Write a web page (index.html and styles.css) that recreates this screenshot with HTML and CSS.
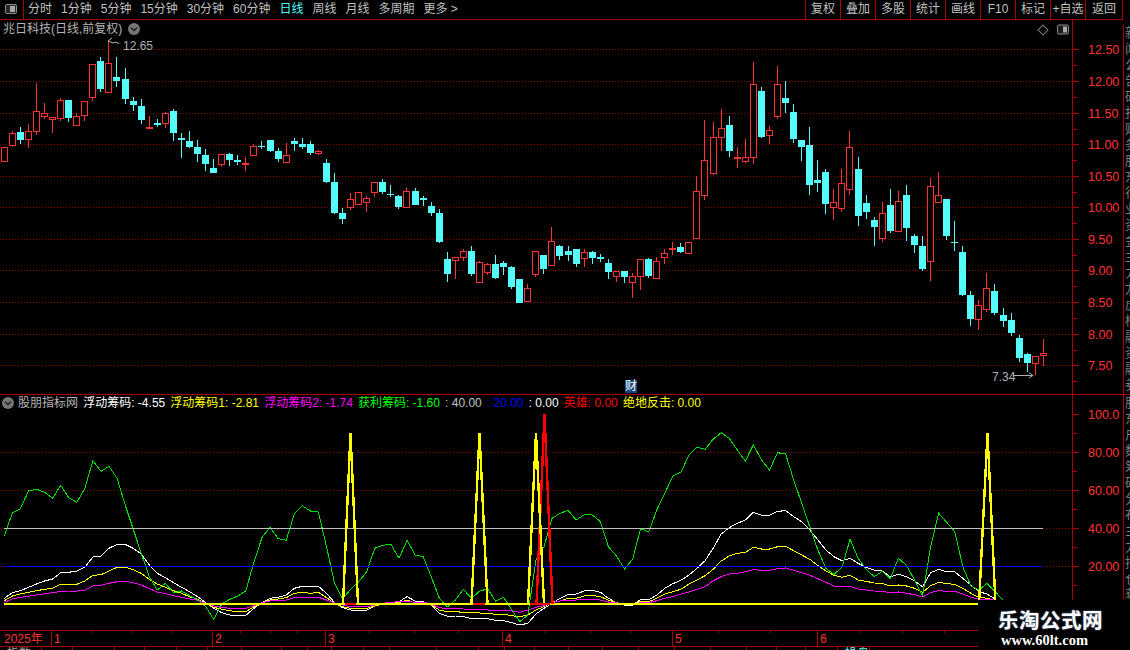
FILE: index.html
```html
<!DOCTYPE html>
<html lang="zh-CN">
<head>
    <meta charset="UTF-8">
    <title>兆日科技</title>
    <link rel="stylesheet" href="styles.css">
</head>
<body>
    <div class="page">
        <div class="topBar">
            <div class="panelToggle">
                <svg class="toggleIcon" viewBox="0 0 12 10"><rect x="0.5" y="0.5" width="11" height="9" rx="1.5" fill="#262626" stroke="#8c8c8c"/><rect x="5" y="2" width="5" height="6" fill="#a8a8a8"/></svg>
            </div>
            <div class="periods">
                <span>分时</span><span>1分钟</span><span>5分钟</span><span>15分钟</span><span>30分钟</span><span>60分钟</span>
                <span class="periodOn">日线</span><span>周线</span><span>月线</span><span>多周期</span><span>更多 &gt;</span>
            </div>
            <div class="tools">
                <span>复权</span><span>叠加</span><span>多股</span><span>统计</span><span>画线</span><span>F10</span><span>标记</span><span>+自选</span><span>返回</span>
            </div>
        </div>

        <div class="pane paneMain">
            <svg id="mainChart" class="plot" viewBox="0 20 1123 374" width="1123" height="374"></svg>
            <div class="side"><p>新闻公告研报财务股东行业资金主力龙虎榜融资融券</p></div>
            <div class="paneTitle">
                <span>兆日科技(日线,前复权)</span>
                <svg class="chevron" viewBox="0 0 12 12"><circle cx="6" cy="6" r="6" fill="#767676"/><path d="M3 4.8 6 7.6 9 4.8" fill="none" stroke="#1c1c1c" stroke-width="1.4"/></svg>
            </div>
            <div class="paneIcons">
                <span class="diamond"></span>
                <svg class="toggleIcon" viewBox="0 0 12 10"><rect x="0.5" y="0.5" width="11" height="9" rx="1.5" fill="#1a1a1a" stroke="#8c8c8c"/><rect x="6" y="2" width="4" height="6" fill="#a8a8a8"/></svg>
            </div>
            <div class="caiTag">财</div>
        </div>

        <div class="pane paneSub">
            <svg id="subChart" class="plot" viewBox="0 395 1123 251" width="1123" height="251"></svg>
            <div class="side sideSub"><p>股东户数筹码分布主力持仓获利比例</p></div>
            <div class="legend">
                <svg class="chevron" viewBox="0 0 12 12"><circle cx="6" cy="6" r="6" fill="#767676"/><path d="M3 4.8 6 7.6 9 4.8" fill="none" stroke="#1c1c1c" stroke-width="1.4"/></svg>
                <span class="legendName">股朋指标网</span>
                <span class="white">浮动筹码: -4.55</span>
                <span class="yellow">浮动筹码1: -2.81</span>
                <span class="magenta">浮动筹码2: -1.74</span>
                <span class="green">获利筹码: -1.60</span>
                <span class="grey">: 40.00</span>
                <span class="blue">: 20.00</span>
                <span class="white">: 0.00</span>
                <span class="red">英雄: 0.00</span>
                <span class="yellow">绝地反击: 0.00</span>
            </div>
        </div>

        <div class="tabs">
            <span class="tab tabW42">指数</span><span class="tab tabW31"></span><span class="tab tabW42"></span><span class="tab tabW30"></span><span class="tab tabW32"></span><span class="tab tabW31"></span><span class="tab tabW34"></span><span class="tab tabW40"></span><span class="tab tabW26"></span><span class="tab tabW24"></span><span class="tab tabW32"></span><span class="tab tabW26"></span><span class="tab tabW47"></span><span class="tab tabW42"></span><span class="tab tabW26"></span><span class="tab tabW30"></span><span class="tab tabW34"></span><span class="tab tabW34"></span><span class="tab tabW36"></span><span class="tab tabW36"></span><span class="tab tabW36"></span><span class="tab tabW36"></span><span class="tab tabW30"></span><span class="tab tabW29"></span><span class="tab tabW32"></span><span class="tab tabW32 tabOn">操盘</span>
        </div>

        <div class="watermark">
            <div class="markName">乐淘公式网</div>
            <div class="markUrl">www.60lt.com</div>
        </div>
    </div>
    <script src="chart.js"></script>
</body>
</html>
```

FILE: styles.css
```css
*{
    margin: 0;
    padding: 0;
    box-sizing: border-box;
}
html, body{
    background-color: #000;
    overflow: hidden;
}
.page{
    position: relative;
    width: 1130px;
    height: 650px;
    overflow: hidden;
    background-color: #000;
    color: #c0c0c0;
    font-family: "Liberation Sans", "Noto Sans CJK SC", sans-serif;
    font-size: 12px;
    line-height: 14px;
}

/* top bar */
.topBar{
    display: flex;
    width: 1123px;
    height: 20px;
    border-bottom: 1px solid #aa0000;
}
.panelToggle{
    width: 24px;
    padding: 4px 0 0 5px;
    border-right: 1px solid #aa0000;
}
.toggleIcon{
    display: block;
    width: 12px;
    height: 10px;
}
.periods{
    display: flex;
    gap: 9px;
    padding: 2px 0 0 4px;
}
.periodOn{
    color: #54fcfc;
}
.tools{
    display: flex;
    margin-left: auto;
}
.tools span{
    width: 35px;
    padding-top: 2px;
    text-align: center;
    border-left: 1px solid #aa0000;
    white-space: nowrap;
}
.tools span:last-child{
    width: 38px;
    border-right: 1px solid #aa0000;
}

/* chart panes */
.pane{
    position: relative;
    display: flex;
}
.paneMain{
    height: 375px;
    border-bottom: 1px solid #aa0000;
}
.paneSub{
    height: 251px;
}
.plot{
    display: block;
    flex: none;
}
.side{
    flex: none;
    width: 7px;
    margin-top: 5px;
    overflow: hidden;
    border-left: 1px solid #aa0000;
    color: #7c7c7c;
}
.sideSub{
    height: 204px;
    margin-top: 0;
}
.side p{
    width: 13px;
    margin-left: 1px;
    font-size: 13px;
    line-height: 16px;
    word-break: break-all;
}
.paneTitle{
    position: absolute;
    left: 3px;
    top: 2px;
    display: flex;
    align-items: center;
    gap: 6px;
    color: #b4b4b4;
}
.chevron{
    display: block;
    flex: none;
    width: 12px;
    height: 12px;
}
.paneIcons{
    position: absolute;
    left: 1039px;
    top: 4px;
    display: flex;
    align-items: center;
    gap: 10px;
}
.paneIcons .toggleIcon{
    height: 11px;
}
.diamond{
    display: block;
    width: 8px;
    height: 8px;
    border: 1px solid #7c7c7c;
    transform: rotate(45deg);
}
.caiTag{
    position: absolute;
    left: 625px;
    top: 360px;
    width: 12px;
    height: 13px;
    background-color: #14457c;
    color: #fff;
    line-height: 13px;
    text-align: center;
}
.legend{
    position: absolute;
    left: 2px;
    top: 1px;
    display: flex;
    align-items: center;
    gap: 5.1px;
    white-space: nowrap;
}
.legendName{
    margin-left: -1px;
    color: #b4b4b4;
}
.white{ color: #fff; }
.yellow{ color: #ffff00; }
.magenta{ color: #ff00ff; }
.green{ color: #00ff00; }
.grey{ color: #c0c0c0; }
.blue{ color: #0000ff; }
.red{ color: #ff0000; }

/* svg parts */
.axisLabel{
    fill: #ff3232;
    font-size: 12.5px;
    font-family: "Liberation Sans", sans-serif;
}
.dateLabel{
    fill: #ff3232;
    font-size: 12px;
    font-family: "Liberation Sans", "Noto Sans CJK SC", sans-serif;
}
.priceNote{
    fill: #b0b0b0;
    font-size: 12px;
    font-family: "Liberation Sans", sans-serif;
}

/* bottom tabs, only their top edge is on screen */
.tabs{
    display: flex;
    height: 4px;
    padding-left: 0;
    border-top: 1px solid #aa0000;
    overflow: hidden;
}
.tab{
    flex: none;
    height: 12px;
    padding: 1px 0 0 7px;
    border-right: 1px solid #aa0000;
    line-height: 12px;
    color: #aaa;
}
.tabOn{ color: #54fcfc; }
.tabW24{ width: 24px; }
.tabW26{ width: 26px; }
.tabW29{ width: 29px; }
.tabW30{ width: 30px; }
.tabW31{ width: 31px; }
.tabW32{ width: 32px; }
.tabW34{ width: 34px; }
.tabW36{ width: 36px; }
.tabW40{ width: 40px; }
.tabW42{ width: 42px; }
.tabW47{ width: 47px; }

.watermark{
    position: absolute;
    left: 978px;
    top: 600px;
    width: 152px;
    height: 50px;
    padding: 7px 0 0 20px;
    background-color: #000;
    color: #fff;
}
.markName{
    font-family: "Noto Sans CJK SC", sans-serif;
    font-weight: 700;
    font-size: 20.5px;
    line-height: 24px;
    letter-spacing: 0.5px;
    text-shadow: 0 0 2px #7f93b8;
}
.markUrl{
    margin: 2px 0 0 3px;
    font-family: "Liberation Serif", serif;
    font-weight: 700;
    font-size: 14.5px;
    line-height: 15px;
}
```

FILE: chart.js
```javascript
var SVG_NS = "http://www.w3.org/2000/svg";
var RED = "#ff3232";
var CYAN = "#54fcfc";
var LINE_RED = "#aa0000";
var DOT_RED = "#860000";

function add(svg, name, attrs, text) {
    var el = document.createElementNS(SVG_NS, name);
    for (var key in attrs) {
        el.setAttribute(key, attrs[key]);
    }
    if (text) {
        el.textContent = text;
    }
    svg.appendChild(el);
    return el;
}

function hLine(svg, x1, x2, y, color, extra) {
    var attrs = { x1: x1, x2: x2, y1: y + 0.5, y2: y + 0.5, stroke: color, "shape-rendering": "crispEdges" };
    for (var key in extra) {
        attrs[key] = extra[key];
    }
    return add(svg, "line", attrs);
}

function vLine(svg, x, y1, y2, color) {
    return add(svg, "line", { x1: x + 0.5, x2: x + 0.5, y1: y1, y2: y2, stroke: color, "shape-rendering": "crispEdges" });
}

// 第k根K线的x坐标
function candleX(k) {
    return Math.floor(4.2 + 8.055 * k);
}

function polyline(svg, points, color, width) {
    return add(svg, "polyline", {
        points: points.join(" "),
        fill: "none",
        stroke: color,
        "stroke-width": width,
        "stroke-linejoin": "miter",
        "shape-rendering": "crispEdges"
    });
}

// up(1 red / 0 cyan), body top, body bottom, high, low -- in page pixels
var candles = [
    [1,147,162,147,162],[1,133,146,131,147],[0,132,140,127,144],[1,131,140,124,148],[1,111,132,83,135],
    [1,113,117,103,119],[1,117,120,117,133],[1,100,119,98,121],[0,100,118,100,122],[1,116,126,113,126],
    [1,101,116,101,121],[1,64,98,64,101],[0,61,89,57,92],[1,63,93,40,93],[0,77,81,57,87],
    [0,79,99,68,104],[0,101,105,97,111],[0,106,120,99,124],[1,127,129,116,129],[0,123,125,119,127],
    [1,113,124,112,128],[0,111,133,109,141],[0,138,140,133,158],[0,141,147,131,148],[0,147,154,140,162],
    [0,155,164,149,171],[0,168,173,159,173],[1,154,165,154,167],[0,154,160,153,166],[0,160,162,155,165],
    [1,163,165,157,171],[1,146,156,144,156],[0,146,147,141,149],[0,140,151,140,152],[0,151,159,148,162],
    [1,155,163,143,163],[0,141,144,138,151],[0,144,147,138,149],[0,144,153,141,155],[1,151,154,150,155],
    [0,163,182,159,183],[0,182,213,173,214],[0,213,219,208,224],[1,199,208,193,210],[1,192,205,192,205],
    [1,198,203,196,212],[1,182,193,182,197],[0,182,192,179,194],[0,194,195,185,197],[0,196,207,195,209],
    [1,191,208,187,208],[0,191,205,188,205],[0,198,200,196,206],[0,206,213,202,216],[0,213,242,209,243],
    [0,259,274,252,282],[1,257,261,257,279],[1,251,258,249,261],[0,251,274,246,276],[1,262,283,261,283],
    [1,264,273,263,275],[0,264,278,255,279],[0,263,267,261,275],[0,267,287,266,289],[0,279,303,279,303],
    [1,288,302,284,302],[1,251,275,251,277],[0,255,269,255,274],[1,241,266,227,266],[0,246,256,245,260],
    [0,251,255,246,261],[0,249,264,249,267],[1,252,259,249,267],[0,252,258,251,264],[0,257,259,254,262],
    [0,263,272,259,279],[1,271,277,271,282],[0,271,277,271,283],[1,276,283,273,298],[1,259,277,259,290],
    [0,259,276,258,278],[1,261,279,257,279],[1,253,258,249,264],[1,248,250,242,255],[0,247,252,243,253],
    [1,242,254,242,254],[1,191,239,176,239],[1,160,196,120,200],[1,137,174,122,175],[1,128,138,109,151],
    [0,125,151,116,157],[1,157,158,147,168],[1,157,162,139,163],[1,84,158,62,164],[0,91,137,87,138],
    [1,130,136,126,144],[1,84,117,66,119],[0,98,103,81,113],[0,112,139,104,143],[0,140,147,140,161],
    [0,145,185,127,195],[0,180,183,160,192],[0,172,204,169,214],[1,202,208,189,220],[1,183,209,169,212],
    [1,147,190,131,195],[0,169,216,157,226],[0,203,212,195,219],[0,220,227,217,246],[1,213,239,202,242],
    [0,205,231,189,233],[1,201,232,191,232],[0,195,228,185,241],[0,236,245,234,253],[0,246,269,236,271],
    [1,186,262,178,281],[1,195,203,172,203],[0,199,236,199,240],[0,242,243,221,251],[0,252,295,246,296],
    [0,295,319,291,326],[1,305,320,300,330],[1,288,310,273,312],[0,291,313,284,315],[0,315,321,308,327],
    [0,320,333,313,336],[0,338,358,335,362],[0,354,363,353,372],[1,356,364,356,375],[1,353,356,339,366]
];

// 指标线，一根K线一个点，单位是1/3像素，从 y=430 算起
var whiteLine = [505,488,482,472,462,453,447,428,427,423,412,381,379,355,343,343,355,372,405,430,443,458,472,485,500,518,535,548,555,556,556,535,518,505,502,495,475,469,469,469,490,518,533,540,541,541,527,520,518,515,500,513,515,525,550,558,558,560,566,565,566,571,572,578,585,580,552,535,520,505,493,492,483,481,487,505,518,525,525,509,510,495,475,461,451,435,415,392,355,312,293,280,270,247,256,256,244,242,260,275,300,330,360,380,392,385,400,412,420,423,440,433,440,452,470,428,418,425,426,445,465,485,492,507];
var yellowLine = [512,498,492,487,482,478,475,463,463,463,453,436,434,423,412,411,419,430,448,462,472,482,490,500,508,520,532,538,542,545,545,530,518,510,507,503,490,487,490,487,503,520,530,535,536,535,528,522,519,518,510,518,519,525,540,545,545,547,548,549,550,553,553,557,560,555,540,530,518,513,505,505,498,496,500,510,518,522,522,515,515,505,492,485,478,462,450,437,418,393,378,370,367,352,357,357,350,349,362,375,388,407,423,436,442,436,450,454,459,460,468,465,468,475,487,467,457,461,463,475,490,502,505,510];
var magentaLine = [517,507,502,499,495,491,488,484,483,483,481,468,466,460,455,454,458,465,476,486,491,497,502,507,511,520,528,532,535,535,535,527,518,513,512,510,503,502,502,502,510,519,525,530,530,530,525,520,517,515,514,517,517,522,533,536,536,537,538,538,540,540,541,543,547,540,532,527,518,513,510,510,508,508,510,516,519,522,522,518,518,512,505,500,492,486,478,470,452,440,432,430,425,419,421,421,416,414,421,428,436,446,457,468,471,469,477,480,483,484,489,486,490,494,501,488,482,484,484,492,502,507,507,508];
var greenLine = [318,248,236,183,178,187,205,166,203,217,175,92,124,109,145,224,297,370,440,480,460,488,483,497,510,530,568,522,508,498,482,395,322,292,326,331,252,227,243,246,350,460,506,478,455,425,355,346,343,385,331,375,380,440,505,531,510,478,505,484,476,514,502,540,575,555,390,350,265,250,241,270,254,255,275,350,378,417,388,296,306,240,190,138,127,75,52,58,28,8,25,60,93,44,90,120,68,72,150,220,290,360,415,433,412,328,385,418,440,424,446,385,406,450,497,350,250,277,305,410,468,480,460,485,510];

function linePoints(values) {
    var pts = [];
    for (var i = 0; i < values.length; i++) {
        pts.push((4.3 + 8.055 * i).toFixed(1) + "," + (430 + values[i] / 3).toFixed(1));
    }
    return pts;
}

function drawAxis(svg, top, bottom, labels, step) {
    vLine(svg, 1072, top, bottom, LINE_RED);
    for (var i = 0; i < labels.length; i++) {
        var y = labels[i][1];
        hLine(svg, 1072, 1079, y, LINE_RED);
        if (y + step < bottom) {
            hLine(svg, 1072, 1077, y + step, LINE_RED);
        }
        add(svg, "text", { x: 1088, y: y + 5, "class": "axisLabel" }, labels[i][0]);
    }
}

function drawMain(svg) {
    var labels = [["12.50",49],["12.00",81],["11.50",113],["11.00",144],["10.50",176],["10.00",207],["9.50",239],["9.00",270],["8.50",302],["8.00",334],["7.50",365]];
    for (var i = 0; i < labels.length; i++) {
        hLine(svg, 0, 1072, labels[i][1], DOT_RED, { "stroke-dasharray": "1 2" });
    }
    drawAxis(svg, 20, 394, labels, 16);

    candles.forEach(function (c, k) {
        var x = candleX(k);
        var color = c[0] ? RED : CYAN;
        vLine(svg, x, c[3], c[4], color);
        if (c[0]) {
            add(svg, "rect", {
                x: x - 2.5, y: c[1] + 0.5, width: 6, height: Math.max(c[2] - c[1] - 1, 1),
                fill: "#000", stroke: color, "shape-rendering": "crispEdges"
            });
        } else {
            add(svg, "rect", {
                x: x - 3, y: c[1], width: 7, height: Math.max(c[2] - c[1], 1),
                fill: color, "shape-rendering": "crispEdges"
            });
        }
    });

    // 最高价、最低价标注
    add(svg, "polyline", { points: "112,38 108,41 113,43 116,42 119,44", fill: "none", stroke: "#b0b0b0" });
    add(svg, "text", { x: 123, y: 50, "class": "priceNote" }, "12.65");
    add(svg, "text", { x: 992, y: 381, "class": "priceNote" }, "7.34");
    hLine(svg, 1013, 1033, 375, "#b0b0b0");
    add(svg, "polyline", { points: "1029,372.5 1033,375.5 1029,378", fill: "none", stroke: "#b0b0b0" });
}

function drawSub(svg) {
    var labels = [["100.0",414],["80.00",452],["60.00",490],["40.00",528],["20.00",566]];
    hLine(svg, 0, 1072, 452, DOT_RED, { "stroke-dasharray": "1 2" });
    hLine(svg, 0, 1072, 490, DOT_RED, { "stroke-dasharray": "1 2" });
    hLine(svg, 0, 1072, 528, DOT_RED, { "stroke-dasharray": "1 2" });
    hLine(svg, 0, 1072, 566, DOT_RED, { "stroke-dasharray": "1 2" });
    drawAxis(svg, 395, 600, labels, 19);

    polyline(svg, linePoints(whiteLine), "#ffffff", 1);
    polyline(svg, linePoints(yellowLine), "#ffff00", 1);
    polyline(svg, linePoints(magentaLine), "#ff00ff", 1);
    polyline(svg, linePoints(greenLine), "#00e000", 1);
    hLine(svg, 4, 1043, 528, "#c0c0c0");
    hLine(svg, 4, 1043, 566, "#0000ff");

    // 零轴和信号尖峰
    add(svg, "line", { x1: 4, x2: 978, y1: 604, y2: 604, stroke: "#ffff00", "stroke-width": 2, "shape-rendering": "crispEdges" });
    polyline(svg, ["536.5,604", "544.5,414", "552.5,604"], "#ff0000", 2.4);
    [[343, 350.5, 358], [471.5, 479.5, 487.5], [528, 536, 544], [979, 987.5, 995.5]].forEach(function (s) {
        polyline(svg, [s[0] + ",604", s[1] + ",433", s[2] + ",604"], "#ffff00", 2.4);
    });
    [[345, 356], [473, 485], [530, 550]].forEach(function (r) {
        add(svg, "line", { x1: r[0], x2: r[1], y1: 604, y2: 604, stroke: "#ff0000", "stroke-width": 2, "shape-rendering": "crispEdges" });
    });

    // 日期栏
    hLine(svg, 0, 1123, 630, LINE_RED);
    add(svg, "text", { x: 4, y: 643, "class": "dateLabel" }, "2025年");
    [[51, "1"], [212, "2"], [325, "3"], [502, "4"], [672, "5"], [817, "6"]].forEach(function (m) {
        vLine(svg, m[0], 630, 646, LINE_RED);
        add(svg, "text", { x: m[0] + 3, y: 643, "class": "dateLabel" }, m[1]);
    });
    [91, 132, 172, 240, 270, 297, 369, 414, 458, 545, 590, 630, 718, 770, 859, 902, 944].forEach(function (x) {
        vLine(svg, x, 630, 633, LINE_RED);
    });
}

window.onload = function () {
    drawMain(document.getElementById("mainChart"));
    drawSub(document.getElementById("subChart"));
};
```
